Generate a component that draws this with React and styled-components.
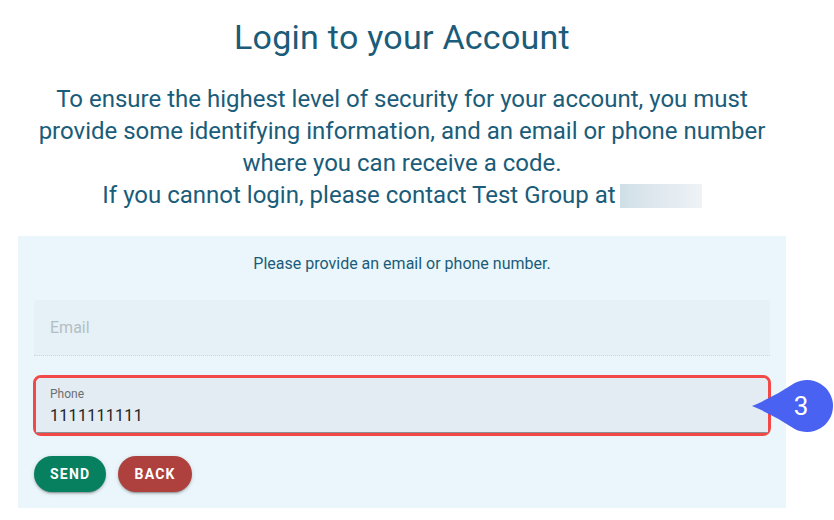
import React from "react";
import styled, { createGlobalStyle } from "styled-components";

const GlobalStyle = createGlobalStyle`
  html, body {
    margin: 0;
    padding: 0;
    background: #ffffff;
    overflow-x: hidden;
  }
  body {
    font-family: Roboto, "Liberation Sans", sans-serif;
  }
`;

const Page = styled.div`
  width: 768px;
  padding: 17px 0 0 18px;
  color: #1a5c79;
`;

const Title = styled.h1`
  margin: 0;
  font-size: 34px;
  line-height: 40px;
  font-weight: 400;
  letter-spacing: 0.25px;
  text-align: center;
`;

const Intro = styled.p`
  margin: 26px 0 0;
  font-size: 24px;
  line-height: 32px;
  text-align: center;
`;

const Redacted = styled.span`
  display: inline-block;
  width: 82px;
  height: 24px;
  margin-left: 4px;
  vertical-align: -5px;
  background: linear-gradient(90deg, #cfdfe7 0%, #dfe8ee 45%, #eef3f6 100%);
`;

const Panel = styled.div`
  margin-top: 25px;
  padding: 16px;
  background: #eaf6fb;
`;

const Hint = styled.div`
  font-size: 16px;
  line-height: 24px;
  text-align: center;
  margin-bottom: 24px;
`;

const Field = styled.div`
  height: 56px;
  box-sizing: border-box;
  display: flex;
  flex-direction: column;
  justify-content: ${({ $filled }) => ($filled ? "flex-start" : "center")};
  padding: ${({ $filled }) => ($filled ? "8px 14px 0" : "0 16px")};
  border-radius: 4px 4px 0 0;
  background: ${({ $filled }) => ($filled ? "#e3ecf2" : "#e6f1f7")};
  border-bottom: ${({ $filled }) =>
    $filled ? "1px solid #8b9094" : "1px dotted #c9d8e0"};
`;

const Placeholder = styled.span`
  font-size: 16px;
  line-height: 24px;
  color: #b3bec4;
`;

const Label = styled.span`
  font-size: 12px;
  line-height: 16px;
  color: #6b6f72;
`;

const Value = styled.span`
  margin-top: 2px;
  font-size: 16px;
  line-height: 24px;
  color: #222426;
  letter-spacing: 0.3px;
`;

const Highlight = styled.div`
  position: relative;
  margin: 19px -1px 0;
  border: 3px solid #f24848;
  border-radius: 8px;

  & > ${Field} {
    height: 55px;
    border-radius: 5px 5px 0 0;
  }
`;

const Badge = styled.svg`
  position: absolute;
  right: -66px;
  top: 50%;
  transform: translateY(-50%);
`;

const Actions = styled.div`
  display: flex;
  gap: 12px;
  margin-top: 20px;
`;

const Button = styled.button`
  height: 36px;
  padding: 0 16px;
  border: none;
  border-radius: 18px;
  background: ${({ $tone }) => ($tone === "danger" ? "#ae403d" : "#07805f")};
  color: #ffffff;
  font-family: Roboto, "Liberation Sans", sans-serif;
  font-size: 14px;
  font-weight: 700;
  letter-spacing: 1.25px;
  text-transform: uppercase;
  box-shadow: 0 3px 1px -2px rgba(0, 0, 0, 0.2), 0 2px 2px 0 rgba(0, 0, 0, 0.14),
    0 1px 5px 0 rgba(0, 0, 0, 0.12);
  cursor: pointer;
`;

const StepBadge = ({ n }) => (
  <Badge width="82" height="52" viewBox="0 0 82 52">
    <path
      d="M0 26 Q22 17 42.7 3.1 A26 26 0 1 1 42.7 48.9 Q22 35 0 26 Z"
      fill="#4a62f2"
    />
    <text
      x="49"
      y="35"
      textAnchor="middle"
      fill="#ffffff"
      fontSize="26"
      fontFamily="Roboto, 'Liberation Sans', sans-serif"
    >
      {n}
    </text>
  </Badge>
);

export default function App() {
  return (
    <>
      <GlobalStyle />
      <Page>
        <Title>Login to your Account</Title>
        <Intro>
          To ensure the highest level of security for your account, you must
          provide some identifying information, and an email or phone number
          where you can receive a code.
          <br />
          If you cannot login, please contact Test Group at
          <Redacted />
        </Intro>
        <Panel>
          <Hint>Please provide an email or phone number.</Hint>
          <Field>
            <Placeholder>Email</Placeholder>
          </Field>
          <Highlight>
            <Field $filled>
              <Label>Phone</Label>
              <Value>1111111111</Value>
            </Field>
            <StepBadge n={3} />
          </Highlight>
          <Actions>
            <Button>Send</Button>
            <Button $tone="danger">Back</Button>
          </Actions>
        </Panel>
      </Page>
    </>
  );
}
